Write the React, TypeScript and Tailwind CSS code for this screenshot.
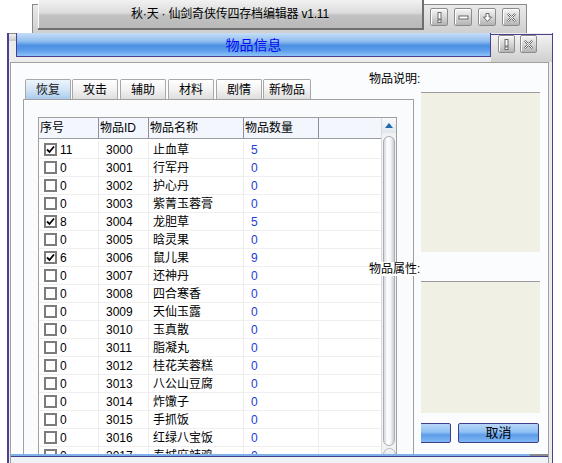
import React from 'react';

const rows = [
  { c: true, n: '11', id: '3000', name: '止血草', q: '5' },
  { c: false, n: '0', id: '3001', name: '行军丹', q: '0' },
  { c: false, n: '0', id: '3002', name: '护心丹', q: '0' },
  { c: false, n: '0', id: '3003', name: '紫菁玉蓉膏', q: '0' },
  { c: true, n: '8', id: '3004', name: '龙胆草', q: '5' },
  { c: false, n: '0', id: '3005', name: '晗灵果', q: '0' },
  { c: true, n: '6', id: '3006', name: '鼠儿果', q: '9' },
  { c: false, n: '0', id: '3007', name: '还神丹', q: '0' },
  { c: false, n: '0', id: '3008', name: '四合寒香', q: '0' },
  { c: false, n: '0', id: '3009', name: '天仙玉露', q: '0' },
  { c: false, n: '0', id: '3010', name: '玉真散', q: '0' },
  { c: false, n: '0', id: '3011', name: '脂凝丸', q: '0' },
  { c: false, n: '0', id: '3012', name: '桂花芙蓉糕', q: '0' },
  { c: false, n: '0', id: '3013', name: '八公山豆腐', q: '0' },
  { c: false, n: '0', id: '3014', name: '炸馓子', q: '0' },
  { c: false, n: '0', id: '3015', name: '手抓饭', q: '0' },
  { c: false, n: '0', id: '3016', name: '红绿八宝饭', q: '0' },
  { c: false, n: '0', id: '3017', name: '寿城麻辣鸡', q: '0' },
];

const tabs = [
  { t: '恢复', w: 'w-[46px]', m: 'ml-[2px]' },
  { t: '攻击', w: 'w-[46px]', m: 'ml-[1px]' },
  { t: '辅助', w: 'w-[46px]', m: 'ml-[2px]' },
  { t: '材料', w: 'w-[46px]', m: 'ml-[2px]' },
  { t: '剧情', w: 'w-[46px]', m: 'ml-[2px]' },
  { t: '新物品', w: 'w-[48px]', m: 'ml-[1px]' },
];

function Glyph({ kind }: { kind: string }) {
  const s = { fill: '#ffffff', stroke: '#6a6a6a', strokeWidth: 1 };
  return (
    <svg width="11" height="11" viewBox="0 0 11 11">
      {kind === 'bang' && (
        <>
          <rect x="4" y="0.5" width="3" height="6.5" {...s} />
          <rect x="4" y="8" width="3" height="2.5" {...s} />
        </>
      )}
      {kind === 'min' && <rect x="1" y="4" width="9" height="3" {...s} />}
      {kind === 'down' && <path d="M4 1.5 H7 V5 H9.5 L5.5 9.5 L1.5 5 H4 Z" {...s} />}
      {kind === 'x' && (
        <path
          d="M1.5 2.5 L2.5 1.5 L5.5 4.5 L8.5 1.5 L9.5 2.5 L6.5 5.5 L9.5 8.5 L8.5 9.5 L5.5 6.5 L2.5 9.5 L1.5 8.5 L4.5 5.5 Z"
          {...s}
        />
      )}
    </svg>
  );
}

function WinBtn({ kind, w }: { kind: string; w: string }) {
  return (
    <div
      className={`${w} h-[18px] rounded-[2px] border border-[#8c8c8c] bg-[linear-gradient(to_bottom,#f6f6f6,#d6d6d6_50%,#b4b4b4)] shadow-[inset_1px_1px_0_#ffffff] flex items-center justify-center`}
    >
      <Glyph kind={kind} />
    </div>
  );
}

function Check({ on }: { on: boolean }) {
  return (
    <div className="w-[13px] h-[13px] border-2 border-[#7c7c7c] bg-white flex items-center justify-center shrink-0">
      {on && (
        <svg width="9" height="9" viewBox="0 0 9 9">
          <path d="M1 4.5 L3.5 7 L8 1.5" fill="none" stroke="#000" strokeWidth="1.8" />
        </svg>
      )}
    </div>
  );
}

export default function App() {
  return (
    <div className="relative w-[562px] h-[463px] overflow-hidden bg-white text-[12px] leading-[14px] text-black font-['Liberation_Sans','Noto_Sans_CJK_SC',sans-serif]">
      {/* main window behind */}
      <div className="absolute left-[32px] top-[4px] w-[495px] h-[36px] border-l border-t border-r border-[#8a8a8a] bg-[linear-gradient(to_bottom,#eaeaea,#c8c8c8)] flex">
        <div className="ml-[5px] -mt-[5px] w-[386px] h-[30px] border-b-2 border-r-2 border-[#6e6e6e] bg-[linear-gradient(to_bottom,#f2f2f2,#dcdcdc_45%,#c2c2c2_55%,#b8b8b8)] shadow-[inset_1px_0_0_#ffffff] flex items-center justify-center text-[12px] tracking-[-0.2px]">
          秋·天 · 仙剑奇侠传四存档编辑器 v1.11
        </div>
        <div className="flex gap-[6px] pl-[6px] pt-[3px]">
          <WinBtn kind="bang" w="w-[18px]" />
          <WinBtn kind="min" w="w-[18px]" />
          <WinBtn kind="down" w="w-[18px]" />
          <WinBtn kind="x" w="w-[18px]" />
        </div>
      </div>

      {/* dialog */}
      <div className="absolute left-[7px] top-[33px] w-[546px] h-[430px] border-l-2 border-r border-[#4b4090] bg-[#ececec] flex flex-col">
        <div className="h-[29px] flex shrink-0">
          <div className="w-[7px] h-[8px] border-t border-[#8a8a8a] bg-[linear-gradient(to_bottom,#f0f0f0,#c8c8c8)]" />
          <div className="w-[475px] h-[24px] border-l border-b border-r border-[#4b4090] bg-[linear-gradient(to_bottom,#c6def8,#92bff0_35%,#4b8fe2_55%,#5c9ceb_75%,#8cc2f8)] flex items-center justify-center text-[14px] text-[#0a0af0]">
            物品信息
          </div>
          <div className="flex-1 mt-[1px] border-t border-[#4b4090] bg-[linear-gradient(to_bottom,#f2f2f2,#cfcfcf)] flex gap-[5px] pl-[7px]">
            <WinBtn kind="bang" w="w-[17px]" />
            <WinBtn kind="x" w="w-[17px]" />
          </div>
        </div>

        <div className="relative flex-1 ml-[1px] mr-[3px] border-t border-l border-r border-[#a0a0a0] bg-[#fbfcfd] flex pl-[12px] pt-[16px] overflow-hidden">
          {/* tab control */}
          <div className="w-[391px] flex flex-col">
            <div className="h-[20px] flex items-end">
              {tabs.map((t, i) => (
                <div
                  key={t.t}
                  className={`${t.w} ${t.m} h-[20px] border-t border-l border-r border-[#a8a8a8] rounded-t-[2px] flex items-center justify-center ${
                    i === 0
                      ? 'bg-[linear-gradient(to_bottom,#eef5fc,#cfe2f4_55%,#a9cbec)] text-[#1a1a1a]'
                      : 'bg-[linear-gradient(to_bottom,#ffffff,#f2f2f2_50%,#dedede)]'
                  }`}
                >
                  {t.t}
                </div>
              ))}
            </div>
            <div className="flex-1 border border-[#a0a0a0] bg-[#fafbfc] pl-[14px] pt-[17px]">
              <div className="w-[359px] h-[400px] border-l border-t border-r border-[#a0a0a0] bg-white flex">
                <div className="w-[343px] flex flex-col">
                  <div className="h-[21px] flex bg-[#f3f7fd] border-b border-[#9c9ca4] shrink-0">
                    <div className="w-[60px] border-r border-[#8e8e9c] pl-[1px] flex items-center">序号</div>
                    <div className="w-[50px] border-r border-[#8e8e9c] pl-[1px] flex items-center">物品ID</div>
                    <div className="w-[95px] border-r border-[#8e8e9c] pl-[1px] flex items-center">物品名称</div>
                    <div className="w-[75px] border-r border-[#8e8e9c] pl-[1px] flex items-center">物品数量</div>
                    <div className="flex-1" />
                  </div>
                  <div className="pt-[2px] flex flex-col">
                    {rows.map((r) => (
                      <div key={r.id} className="h-[18px] flex border-b border-[#efefef] shrink-0">
                        <div className="w-[60px] border-r border-[#ededed] pl-[5px] flex items-center">
                          <Check on={r.c} />
                          <span className="ml-[3px]">{r.n}</span>
                        </div>
                        <div className="w-[50px] border-r border-[#ededed] pl-[7px] flex items-center">{r.id}</div>
                        <div className="w-[95px] border-r border-[#ededed] pl-[4px] flex items-center">{r.name}</div>
                        <div className="w-[75px] border-r border-[#ededed] pl-[7px] flex items-center text-[#1c3cd6]">{r.q}</div>
                        <div className="flex-1" />
                      </div>
                    ))}
                  </div>
                </div>
                {/* scrollbar */}
                <div className="w-[15px] bg-[#f1f2f4] border-l border-[#d8dadc] flex flex-col items-center">
                  <div className="w-full h-[15px] bg-[linear-gradient(to_bottom,#f8fafc,#dfe6ee)] flex items-center justify-center">
                    <svg width="8" height="5" viewBox="0 0 8 5">
                      <path d="M4 0 L8 5 H0 Z" fill="#1e6aa8" />
                    </svg>
                  </div>
                  <div className="mt-[3px] w-[12px] h-[310px] rounded-full border border-[#a9afb8] bg-[linear-gradient(to_right,#d3d7dd,#ffffff_35%,#f4f5f7_65%,#c9ced6)]" />
                  <div className="mt-[2px] w-[13px] h-[14px] rounded-full border border-[#b4b8c0] bg-[linear-gradient(to_bottom,#f4f5f7,#d8dce2)]" />
                </div>
              </div>
            </div>
          </div>

          {/* right column */}
          <div className="ml-[7px] w-[119px] flex flex-col">
            <div className="mt-[13px] h-[160px] border-t border-[#9a9aa0] bg-[#f0f0e4]" />
            <div className="mt-[29px] h-[132px] border-t border-[#9a9aa0] bg-[#f0f0e4]" />
            <div className="mt-[10px] flex">
              <div className="w-[30px] h-[20px] overflow-hidden flex justify-end">
                <div className="w-[81px] h-[20px] shrink-0 rounded-[2px] border border-[#3f3f8a] bg-[linear-gradient(to_bottom,#b8d7f8,#8fc0f4_45%,#5e9de8_60%,#7fb6f4)]" />
              </div>
              <div className="ml-[7px] w-[81px] h-[20px] rounded-[2px] border border-[#3f3f8a] bg-[linear-gradient(to_bottom,#b8d7f8,#8fc0f4_45%,#5e9de8_60%,#7fb6f4)] flex items-center justify-center text-[13px]">
                取消
              </div>
            </div>
          </div>

          {/* labels overlapping */}
          <div className="absolute left-[358px] top-[9px] leading-[14px]">物品说明:</div>
          <div className="absolute left-[358px] top-[199px] leading-[14px] bg-white">物品属性:</div>

          {/* bottom edge covering the rest */}
          <div className="absolute left-0 right-0 top-[391px] bottom-0 bg-[#eef1f5] flex flex-col">
            <div className="flex">
              <div className="w-[519px] h-[2px] bg-[#7fb2ea]" />
              <div className="flex-1 h-[2px] bg-[#8a8a8a]" />
            </div>
            <div className="h-[1px] bg-[#3f3f8a]" />
          </div>
        </div>
      </div>
    </div>
  );
}
